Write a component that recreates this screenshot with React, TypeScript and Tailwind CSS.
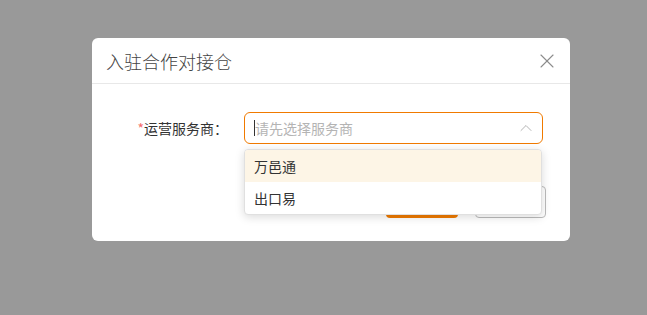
import { X, ChevronUp } from 'lucide-react'

const font = { fontFamily: '"Noto Sans CJK SC", "Noto Sans", sans-serif' }

export default function App() {
  return (
    <div className="h-[315px] w-full bg-[#999999] pl-[92px] pt-[38px]" style={font}>
      <div className="h-[203px] w-[478px] rounded-[6px] bg-white">
        {/* Header */}
        <div className="flex h-[46px] items-center justify-between border-b border-[#e8e8e8] pl-[14px] pr-[11px]">
          <h2 className="text-[18px] font-light leading-none text-[#444444]">入驻合作对接仓</h2>
          <X className="size-[24px] text-[#8c8c8c]" strokeWidth={1.1} />
        </div>

        {/* Body */}
        <div className="pt-[28px]">
          <div className="flex items-center">
            <label className="w-[152px] pr-[16px] text-right text-[14px] text-[#333333]">
              <span className="text-[#f56c6c]">*</span>运营服务商：
            </label>
            <div className="relative">
              <div className="flex h-[32px] w-[299px] items-center justify-between rounded-[6px] border border-[#f07a00] pl-[9px] pr-[6px]">
                <div className="flex items-center">
                  <span className="h-[16px] w-px bg-[#333333]" />
                  <span className="text-[14px] text-[#b4b4b4]">请先选择服务商</span>
                </div>
                <ChevronUp className="size-[20px] text-[#b4b4b4]" strokeWidth={1.2} />
              </div>

              {/* Dropdown */}
              <div className="absolute left-0 top-[37px] z-10 w-[298px] overflow-hidden rounded-[4px] border border-[#e0e0e0] bg-white shadow-[0_2px_10px_rgba(0,0,0,0.15)]">
                <div className="flex h-[32px] items-center bg-[#fdf5e6] px-[9px] text-[14px] text-[#333333]">
                  万邑通
                </div>
                <div className="flex h-[32px] items-center px-[9px] text-[14px] text-[#333333]">
                  出口易
                </div>
              </div>
            </div>
          </div>

          {/* Footer buttons */}
          <div className="mt-[42px] flex justify-end gap-[17px] pr-[24px]">
            <button className="h-[32px] w-[72px] rounded-[4px] bg-[#ef7b00] text-[14px] text-white">
              确定
            </button>
            <button className="h-[32px] w-[71px] rounded-[4px] border border-[#bbbbbb] bg-white text-[14px] text-[#333333]">
              取消
            </button>
          </div>
        </div>
      </div>
    </div>
  )
}
